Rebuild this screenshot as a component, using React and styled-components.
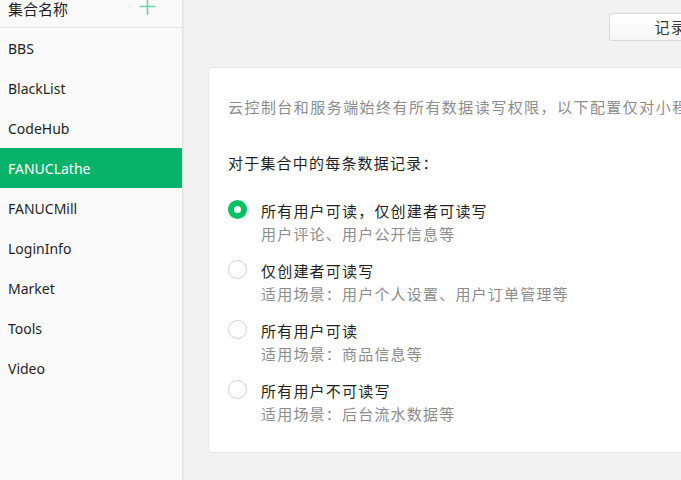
import React from "react";
import styled, { createGlobalStyle } from "styled-components";

const Global = createGlobalStyle`
  html, body { margin: 0; padding: 0; }
  body {
    background: #f2f2f2;
    font-family: "Noto Sans", "Noto Sans CJK SC", sans-serif;
    color: #353535;
    overflow: hidden;
  }
`;

const Page = styled.div`
  display: flex;
  width: 681px;
  height: 480px;
  overflow: hidden;
`;

const Sidebar = styled.aside`
  flex: 0 0 182px;
  background: #fafafa;
  border-right: 1px solid #e2e2e2;
  box-shadow: 1px 0 0 #ececec;
  display: flex;
  flex-direction: column;
`;

const SideHeader = styled.div`
  height: 27px;
  border-bottom: 1px solid #e2e2e2;
  display: flex;
  justify-content: space-between;
  align-items: flex-start;
  padding: 0 26px 0 8px;
`;

const HeaderTitle = styled.span`
  font-family: "Noto Sans CJK SC", sans-serif;
  font-size: 15px;
  line-height: 17px;
  color: #1f1f1f;
`;

const PlusIcon = styled.svg`
  width: 17px;
  height: 17px;
  margin-top: -1px;
`;

const CollectionList = styled.ul`
  list-style: none;
  margin: 0;
  padding: 0;
`;

const CollectionItem = styled.li`
  height: 40px;
  display: flex;
  align-items: center;
  padding-left: 8px;
  font-size: 14px;
  background: ${(p) => (p.$active ? "#07b36a" : "transparent")};
  color: ${(p) => (p.$active ? "#ffffff" : "#1f1f1f")};
`;

const Main = styled.main`
  flex: 1;
  min-width: 0;
  overflow: hidden;
  padding: 13px 0 0 25px;
`;

const Content = styled.div`
  width: 557px;
  display: flex;
  flex-direction: column;
`;

const Toolbar = styled.div`
  display: flex;
  justify-content: flex-end;
  margin-bottom: 26px;
`;

const TabGroup = styled.div`
  display: flex;
  width: 156px;
  overflow: visible;
  white-space: nowrap;
`;

const TabButton = styled.button`
  flex: 0 0 156px;
  height: 28px;
  border: 1px solid #d9d9d9;
  border-radius: 3px;
  background: linear-gradient(#ffffff, #f6f6f6);
  font-family: "Noto Sans CJK SC", sans-serif;
  font-size: 15px;
  letter-spacing: 1.2px;
  color: #353535;
  padding: 0;
  line-height: 26px;
`;

const Card = styled.section`
  background: #ffffff;
  border: 1px solid #e6e6e6;
  border-radius: 3px;
  padding: 29px 19px 26px;
  font-family: "Noto Sans CJK SC", sans-serif;
  font-size: 15px;
  letter-spacing: 1.2px;
  white-space: nowrap;
`;

const Intro = styled.p`
  margin: 0 0 36px;
  line-height: 20px;
  letter-spacing: 1.45px;
  color: #8c8c8c;
`;

const Question = styled.p`
  margin: 0 0 27px;
  line-height: 20px;
  color: #1f1f1f;
`;

const OptionList = styled.div`
  display: flex;
  flex-direction: column;
  gap: 14px;
`;

const Option = styled.label`
  display: flex;
  align-items: flex-start;
  gap: 14px;
`;

const Radio = styled.span`
  flex: 0 0 19px;
  width: 19px;
  height: 19px;
  box-sizing: border-box;
  border-radius: 50%;
  background: #fff;
  border: ${(p) => (p.$checked ? "6px solid #07c160" : "1px solid #d2d2d2")};
`;

const OptionText = styled.div`
  display: flex;
  flex-direction: column;
`;

const OptionTitle = styled.span`
  line-height: 22px;
  color: #1f1f1f;
`;

const OptionDesc = styled.span`
  line-height: 24px;
  color: #8c8c8c;
`;

const collections = ["BBS", "BlackList", "CodeHub", "FANUCLathe", "FANUCMill", "LoginInfo", "Market", "Tools", "Video"];

const options = [
  { title: "所有用户可读，仅创建者可读写", desc: "用户评论、用户公开信息等", checked: true },
  { title: "仅创建者可读写", desc: "适用场景：用户个人设置、用户订单管理等" },
  { title: "所有用户可读", desc: "适用场景：商品信息等" },
  { title: "所有用户不可读写", desc: "适用场景：后台流水数据等" },
];

export default function App() {
  return (
    <>
      <Global />
      <Page>
        <Sidebar>
          <SideHeader>
            <HeaderTitle>集合名称</HeaderTitle>
            <PlusIcon viewBox="0 0 17 17">
              <path d="M8.5 0 V16 M0.5 7.5 H16.5" stroke="#6fd4a6" strokeWidth="1.6" fill="none" />
            </PlusIcon>
          </SideHeader>
          <CollectionList>
            {collections.map((c) => (
              <CollectionItem key={c} $active={c === "FANUCLathe"}>
                {c}
              </CollectionItem>
            ))}
          </CollectionList>
        </Sidebar>
        <Main>
          <Content>
            <Toolbar>
              <TabGroup>
                <TabButton>记录列表</TabButton>
                <TabButton>索引管理</TabButton>
                <TabButton>数据权限</TabButton>
              </TabGroup>
            </Toolbar>
            <Card>
              <Intro>云控制台和服务端始终有所有数据读写权限，以下配置仅对小程序端发起的请求有效。</Intro>
              <Question>对于集合中的每条数据记录：</Question>
              <OptionList>
                {options.map((o) => (
                  <Option key={o.title}>
                    <Radio $checked={o.checked} />
                    <OptionText>
                      <OptionTitle>{o.title}</OptionTitle>
                      <OptionDesc>{o.desc}</OptionDesc>
                    </OptionText>
                  </Option>
                ))}
              </OptionList>
            </Card>
          </Content>
        </Main>
      </Page>
    </>
  );
}
